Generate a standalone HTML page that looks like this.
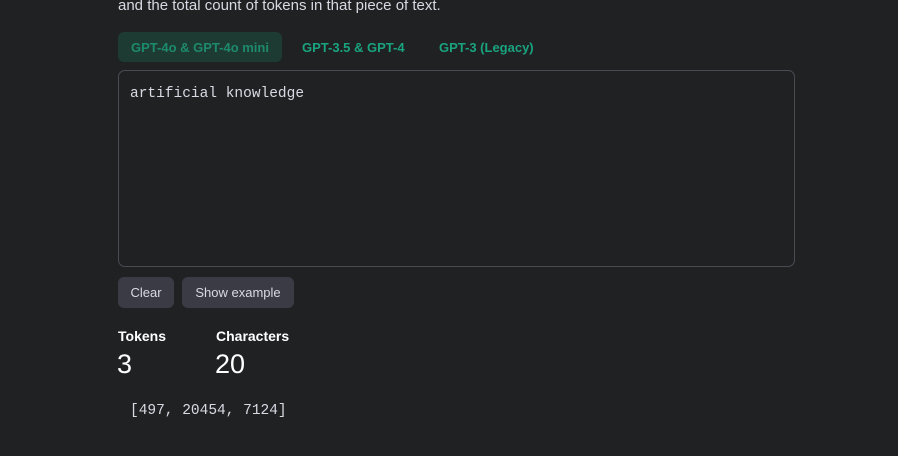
<!DOCTYPE html>
<html><head><style>
body{margin:0;width:898px;height:456px;background:#202123;font-family:"Liberation Sans",sans-serif;color:#ececf1;overflow:hidden;position:relative}
.a{position:absolute}
.top{left:118px;top:-3px;font-size:15px;color:#d9d9e3}
.tab{top:32px;height:30px;line-height:31px;font-size:13px;font-weight:bold;color:#19a37f;border-radius:6px}
.box{left:118px;top:70px;width:677px;height:197px;border:1px solid #4a4b52;border-radius:7px;box-sizing:border-box;background:#202123}
.mono{font-family:"Liberation Mono",monospace;font-size:14.5px;color:#d9d9e3}
.btn{top:277px;height:31px;line-height:32px;font-size:13px;background:#3a3b45;border-radius:6px;color:#d9d9e3;text-align:center}
.lbl{top:328px;font-size:14px;font-weight:bold;color:#fff}
.num{top:349px;font-size:27px;color:#fff}
</style></head><body>
<div class="a top">and the total count of tokens in that piece of text.</div>
<div class="a tab" style="left:118px;width:164px;background:#1e3b33;color:#1d8a6c;text-align:center">GPT-4o &amp; GPT-4o mini</div>
<div class="a tab" style="left:302px">GPT-3.5 &amp; GPT-4</div>
<div class="a tab" style="left:439px">GPT-3 (Legacy)</div>
<div class="a box"></div>
<div class="a mono" style="left:130px;top:86px">artificial knowledge</div>
<div class="a btn" style="left:118px;width:56px">Clear</div>
<div class="a btn" style="left:182px;width:112px">Show example</div>
<div class="a lbl" style="left:118px">Tokens</div>
<div class="a lbl" style="left:216px">Characters</div>
<div class="a num" style="left:117px">3</div>
<div class="a num" style="left:215px">20</div>
<div class="a mono" style="left:130px;top:403px">[497, 20454, 7124]</div>
</body></html>
